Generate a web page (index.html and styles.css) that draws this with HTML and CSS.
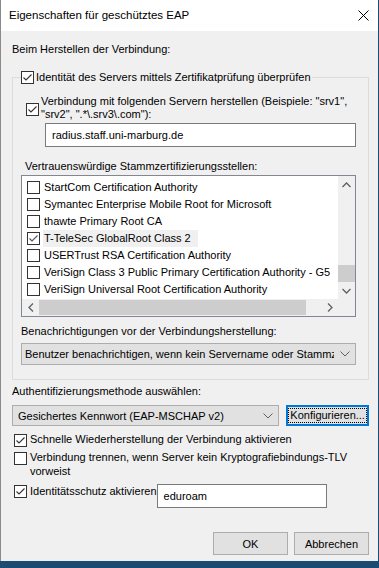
FILE: index.html
```html
<!DOCTYPE html>
<html>
<head>
  <title>Eigenschaften für geschütztes EAP</title>
  <link rel="stylesheet" href="styles.css">
</head>
<body>
  <div class="window">
    <div class="titlebar">
      <span class="title">Eigenschaften für geschütztes EAP</span>
      <svg class="close" width="11" height="11" viewBox="0 0 11 11"><path d="M0.5 0.5 L10.5 10.5 M10.5 0.5 L0.5 10.5" stroke="#000" stroke-width="1" fill="none"/></svg>
    </div>

    <div class="content">
      <div class="label top-label">Beim Herstellen der Verbindung:</div>

      <div class="group">
        <div class="check legend">
          <svg class="cb" width="13" height="13" viewBox="0 0 13 13"><rect x="0.5" y="0.5" width="12" height="12" fill="#fff" stroke="#333"/><path d="M2.5 6.5 L5 9 L10.5 3.5" stroke="#333" stroke-width="1.1" fill="none"/></svg>
          <span>Identität des Servers mittels Zertifikatprüfung überprüfen</span>
        </div>

        <div class="check servers">
          <svg class="cb" width="13" height="13" viewBox="0 0 13 13"><rect x="0.5" y="0.5" width="12" height="12" fill="#fff" stroke="#333"/><path d="M2.5 6.5 L5 9 L10.5 3.5" stroke="#333" stroke-width="1.1" fill="none"/></svg>
          <span>Verbindung mit folgenden Servern herstellen (Beispiele: "srv1",<br>"srv2", ".*\.srv3\.com"):</span>
        </div>
        <div class="textbox server-input">radius.staff.uni-marburg.de</div>

        <div class="label list-label">Vertrauenswürdige Stammzertifizierungsstellen:</div>
        <div class="listbox">
          <div class="list-main">
            <div class="items">
              <div class="item"><svg class="cb" width="13" height="13" viewBox="0 0 13 13"><rect x="0.5" y="0.5" width="12" height="12" fill="#fff" stroke="#333"/></svg><span>StartCom Certification Authority</span></div>
              <div class="item"><svg class="cb" width="13" height="13" viewBox="0 0 13 13"><rect x="0.5" y="0.5" width="12" height="12" fill="#fff" stroke="#333"/></svg><span>Symantec Enterprise Mobile Root for Microsoft</span></div>
              <div class="item"><svg class="cb" width="13" height="13" viewBox="0 0 13 13"><rect x="0.5" y="0.5" width="12" height="12" fill="#fff" stroke="#333"/></svg><span>thawte Primary Root CA</span></div>
              <div class="item"><svg class="cb" width="13" height="13" viewBox="0 0 13 13"><rect x="0.5" y="0.5" width="12" height="12" fill="#fff" stroke="#333"/><path d="M2.5 6.5 L5 9 L10.5 3.5" stroke="#555" stroke-width="1.1" fill="none"/></svg><span class="selected">T-TeleSec GlobalRoot Class 2</span></div>
              <div class="item"><svg class="cb" width="13" height="13" viewBox="0 0 13 13"><rect x="0.5" y="0.5" width="12" height="12" fill="#fff" stroke="#333"/></svg><span>USERTrust RSA Certification Authority</span></div>
              <div class="item"><svg class="cb" width="13" height="13" viewBox="0 0 13 13"><rect x="0.5" y="0.5" width="12" height="12" fill="#fff" stroke="#333"/></svg><span>VeriSign Class 3 Public Primary Certification Authority - G5</span></div>
              <div class="item"><svg class="cb" width="13" height="13" viewBox="0 0 13 13"><rect x="0.5" y="0.5" width="12" height="12" fill="#fff" stroke="#333"/></svg><span>VeriSign Universal Root Certification Authority</span></div>
            </div>
            <div class="vscroll">
              <div class="sbtn"><svg width="9" height="6" viewBox="0 0 9 6"><path d="M0.5 5 L4.5 1 L8.5 5" stroke="#606060" stroke-width="1.3" fill="none"/></svg></div>
              <div class="vtrack"><div class="vthumb"></div></div>
              <div class="sbtn"><svg width="9" height="6" viewBox="0 0 9 6"><path d="M0.5 1 L4.5 5 L8.5 1" stroke="#606060" stroke-width="1.3" fill="none"/></svg></div>
            </div>
          </div>
          <div class="hscroll">
            <div class="sbtn"><svg width="6" height="9" viewBox="0 0 6 9"><path d="M5 0.5 L1 4.5 L5 8.5" stroke="#606060" stroke-width="1.3" fill="none"/></svg></div>
            <div class="htrack"><div class="hthumb"></div></div>
            <div class="sbtn"><svg width="6" height="9" viewBox="0 0 6 9"><path d="M1 0.5 L5 4.5 L1 8.5" stroke="#606060" stroke-width="1.3" fill="none"/></svg></div>
            <div class="corner"></div>
          </div>
        </div>

        <div class="label notify-label">Benachrichtigungen vor der Verbindungsherstellung:</div>
        <div class="combo notify-combo">
          <span class="combo-text">Benutzer benachrichtigen, wenn kein Servername oder Stammzertifikat angegeben ist</span>
          <svg width="10" height="6" viewBox="0 0 10 6"><path d="M0.5 0.5 L5 5 L9.5 0.5" stroke="#606060" stroke-width="1" fill="none"/></svg>
        </div>
      </div>

      <div class="label auth-label">Authentifizierungsmethode auswählen:</div>
      <div class="auth-row">
        <div class="combo auth-combo">
          <span class="combo-text">Gesichertes Kennwort (EAP-MSCHAP v2)</span>
          <svg width="10" height="6" viewBox="0 0 10 6"><path d="M0.5 0.5 L5 5 L9.5 0.5" stroke="#606060" stroke-width="1" fill="none"/></svg>
        </div>
        <div class="button focused"><span class="focus-text">Konfigurieren...</span></div>
      </div>

      <div class="check opt first-opt">
        <svg class="cb" width="13" height="13" viewBox="0 0 13 13"><rect x="0.5" y="0.5" width="12" height="12" fill="#fff" stroke="#333"/><path d="M2.5 6.5 L5 9 L10.5 3.5" stroke="#333" stroke-width="1.1" fill="none"/></svg>
        <span>Schnelle Wiederherstellung der Verbindung aktivieren</span>
      </div>
      <div class="check opt second-opt">
        <svg class="cb" width="13" height="13" viewBox="0 0 13 13"><rect x="0.5" y="0.5" width="12" height="12" fill="#fff" stroke="#333"/></svg>
        <span>Verbindung trennen, wenn Server kein Kryptografiebindungs-TLV<br>vorweist</span>
      </div>
      <div class="identity-row">
        <div class="check opt">
          <svg class="cb" width="13" height="13" viewBox="0 0 13 13"><rect x="0.5" y="0.5" width="12" height="12" fill="#fff" stroke="#333"/><path d="M2.5 6.5 L5 9 L10.5 3.5" stroke="#333" stroke-width="1.1" fill="none"/></svg>
          <span>Identitätsschutz aktivieren</span>
        </div>
        <div class="textbox identity-input">eduroam</div>
      </div>

      <div class="buttons">
        <div class="button">OK</div>
        <div class="button">Abbrechen</div>
      </div>
    </div>
  </div>
</body>
</html>
```

FILE: styles.css
```css
body { margin: 0; background: #1b4b70; font-family: "Liberation Sans", Arial, sans-serif; font-size: 11px; color: #000; }
.window { width: 377px; height: 561px; background: #f0f0f0; border-left: 1px solid #8a8a8a; display: flex; flex-direction: column; overflow: hidden; }
.titlebar { height: 31px; flex: none; background: #fff; display: flex; align-items: center; justify-content: space-between; padding: 0 9px 0 8px; }
.title { font-size: 11.5px; margin-top: -1px; }
.close { margin-top: -1px; }
.content { padding: 0 9px 0 11px; display: flex; flex-direction: column; }
.label { line-height: 16px; white-space: nowrap; }
.top-label { margin-top: 10px; }

.cb { flex: none; display: block; }
.check { display: flex; align-items: flex-start; }

.group { margin-top: 20px; height: 303px; box-sizing: border-box; border: 1px solid #dcdcdc; position: relative; padding: 0 12px 0 0; display: flex; flex-direction: column; }
.legend { position: absolute; top: -7px; left: 8px; background: #f0f0f0; line-height: 13px; padding-right: 1px; }
.legend span { margin-left: 2px; }
.servers { margin: 17px 0 0 13px; align-items: center; line-height: 13px; }
.servers span { margin-left: 2px; }
.servers .cb { margin-top: 2px; }
.textbox { background: #fff; border: 1px solid #7a7a7a; box-sizing: border-box; padding: 0 6px; }
.server-input { margin: 2px 0 0 32px; height: 24px; line-height: 22px; }
.list-label { margin: 11px 0 0 12px; }

.listbox { margin: 1px 0 0 8px; height: 142px; border: 1px solid #828790; background: #fff; box-sizing: border-box; display: flex; flex-direction: column; }
.list-main { display: flex; flex: 1; min-height: 0; }
.items { flex: 1; padding: 3px 0 0 5px; overflow: hidden; }
.item { display: flex; align-items: center; height: 17px; white-space: nowrap; }
.item span { margin-left: 4px; line-height: 17px; }
.item .selected { background: #f0f0f0; margin-left: 3px; padding: 0 7px 0 1px; }
.sbtn { width: 17px; height: 17px; flex: none; display: flex; align-items: center; justify-content: center; }
.vscroll { width: 17px; background: #f0f0f0; display: flex; flex-direction: column; }
.vtrack { flex: 1; display: flex; flex-direction: column; justify-content: flex-end; }
.vthumb { height: 17px; background: #cdcdcd; }
.hscroll { height: 17px; flex: none; background: #f0f0f0; display: flex; }
.htrack { flex: 1; padding: 0; }
.hthumb { height: 15px; margin-top: 1px; width: 267px; background: #cdcdcd; }
.corner { width: 17px; height: 17px; background: #f0f0f0; }

.notify-label { margin: 6px 0 0 8px; }
.combo { display: flex; align-items: center; background: #e1e1e1; border: 1px solid #adadad; box-sizing: border-box; padding: 0 5px 0 3px; }
.combo-text { white-space: nowrap; overflow: hidden; flex: 1; }
.combo svg { flex: none; margin-left: 6px; }
.notify-combo { margin: 4px 0 0 8px; height: 22px; }

.auth-label { margin-top: 3px; }
.auth-row { display: flex; gap: 7px; margin-top: 6px; }
.auth-combo { width: 268px; height: 21px; padding-left: 5px; }
.button { background: #e1e1e1; border: 1px solid #adadad; box-sizing: border-box; display: flex; align-items: center; justify-content: center; }
.focused { width: 83px; height: 21px; border: 2px solid #0078d7; }
.focus-text { outline: 1px dotted #000; outline-offset: 0; line-height: 13px; padding: 0 1px; }

.opt { line-height: 14px; margin-left: 2px; }
.opt span { margin-left: 3px; }
.opt .cb { margin-top: 2px; }
.first-opt { margin-top: 6px; }
.second-opt { margin-top: 3px; }
.identity-row { display: flex; align-items: flex-start; margin-top: 6px; }
.identity-row .cb { margin-top: 1px; }
.identity-input { width: 170px; height: 24px; line-height: 22px; }
.buttons { display: flex; justify-content: flex-end; gap: 6px; margin-top: 24px; }
.buttons .button { width: 75px; height: 23px; }
```
